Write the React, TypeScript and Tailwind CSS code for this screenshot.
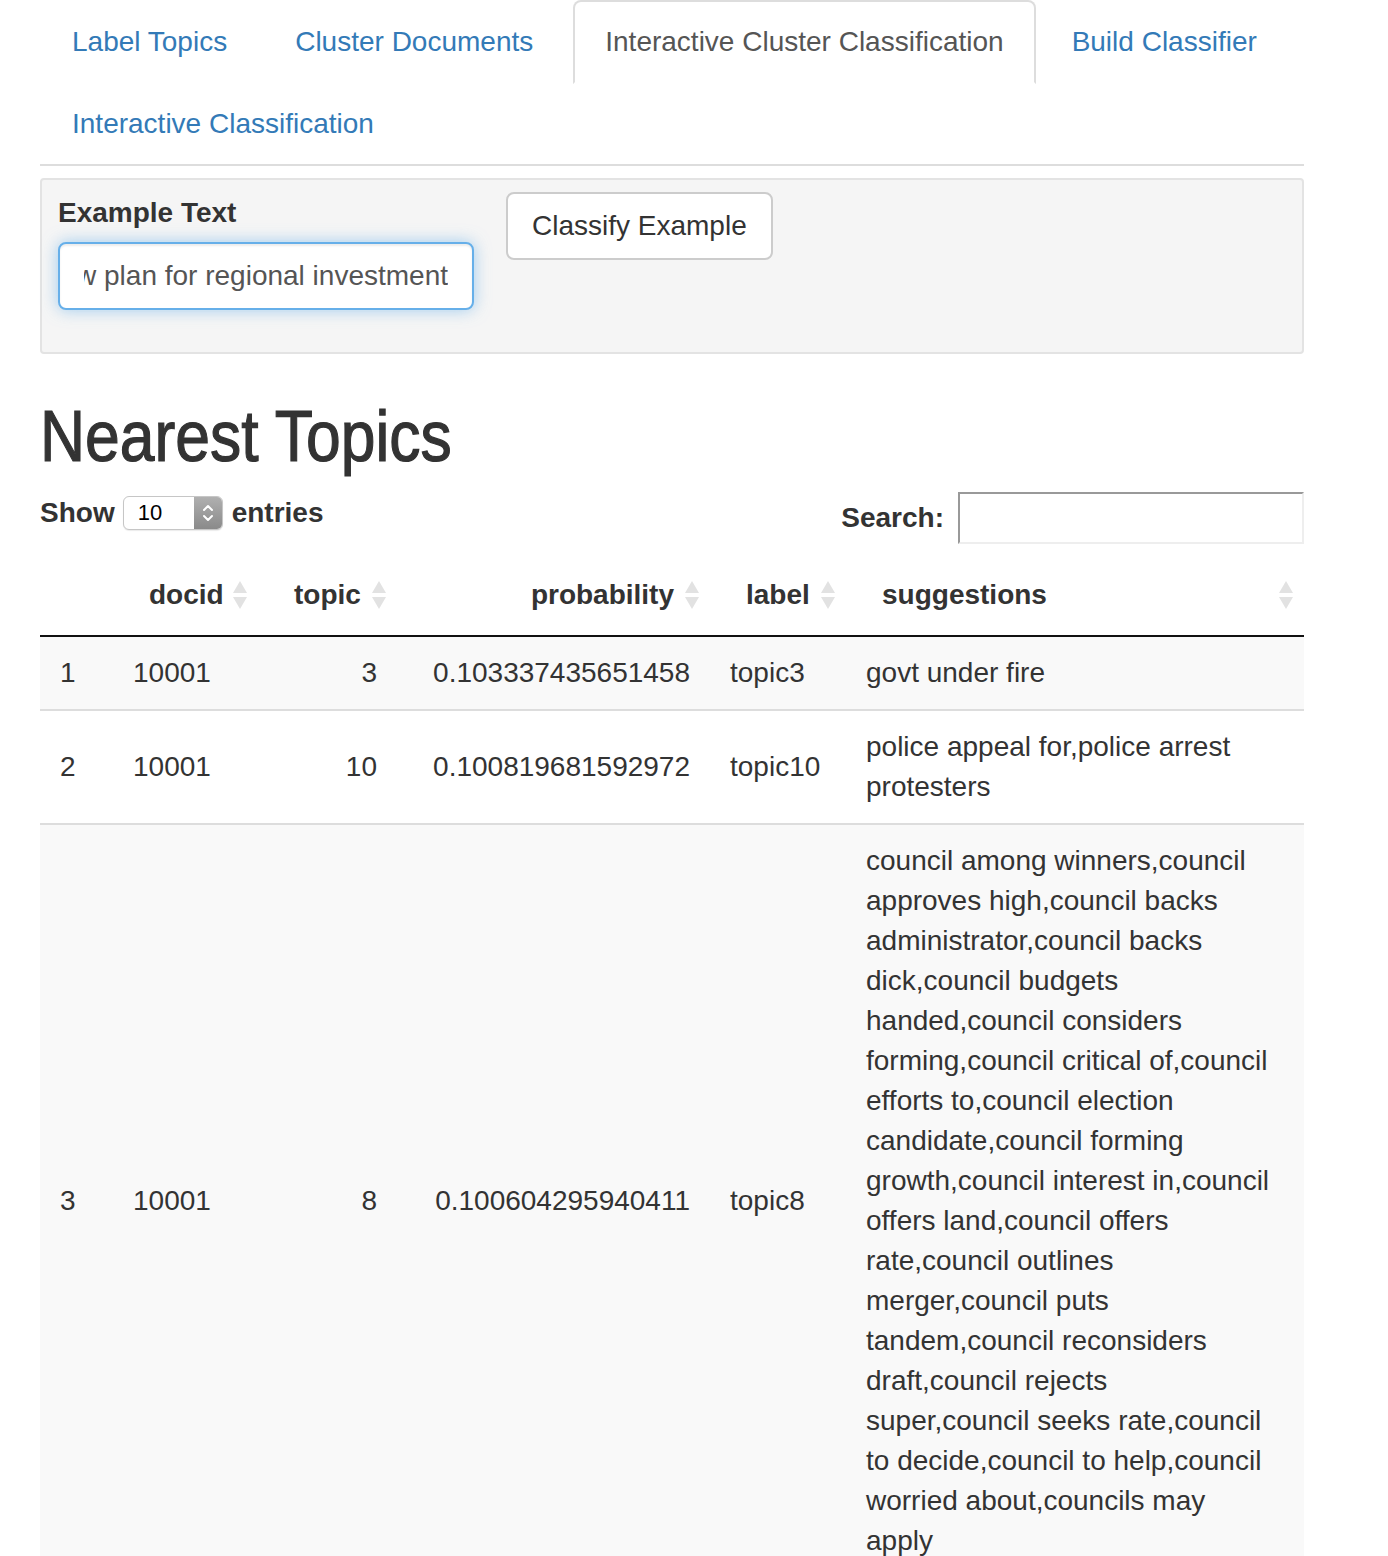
import React from 'react'

const tabs = [
  { name: 'Label Topics', active: false },
  { name: 'Cluster Documents', active: false },
  { name: 'Interactive Cluster Classification', active: true },
  { name: 'Build Classifier', active: false },
  { name: 'Interactive Classification', active: false },
]

interface Row {
  idx: number
  docid: string
  topic: number
  probability: string
  label: string
  lines: string[]
}

const rows: Row[] = [
  { idx: 1, docid: '10001', topic: 3, probability: '0.103337435651458', label: 'topic3', lines: ['govt under fire'] },
  {
    idx: 2, docid: '10001', topic: 10, probability: '0.100819681592972', label: 'topic10',
    lines: ['police appeal for,police arrest', 'protesters'],
  },
  {
    idx: 3, docid: '10001', topic: 8, probability: '0.100604295940411', label: 'topic8',
    lines: [
      'council among winners,council',
      'approves high,council backs',
      'administrator,council backs',
      'dick,council budgets',
      'handed,council considers',
      'forming,council critical of,council',
      'efforts to,council election',
      'candidate,council forming',
      'growth,council interest in,council',
      'offers land,council offers',
      'rate,council outlines',
      'merger,council puts',
      'tandem,council reconsiders',
      'draft,council rejects',
      'super,council seeks rate,council',
      'to decide,council to help,council',
      'worried about,councils may',
      'apply',
    ],
  },
]

function SortIcon() {
  return (
    <svg className="absolute right-[10px] top-1/2 -translate-y-1/2" width="16" height="32" viewBox="0 0 16 32">
      <polygon points="8,2 15,14 1,14" fill="#e2e2e2" />
      <polygon points="1,18 15,18 8,30" fill="#e2e2e2" />
    </svg>
  )
}

function Th({ children, right = false }: { children?: React.ReactNode; right?: boolean }) {
  return (
    <th className={`relative px-[36px] py-[20px] font-bold leading-[40px] border-b-[2px] border-[#111] ${right ? 'text-right' : 'text-left'}`}>
      {children}
      <SortIcon />
    </th>
  )
}

export default function App() {
  return (
    <div className="w-[1388px] min-h-[1556px] bg-white text-[#333] text-[28px] leading-[40px]" style={{ fontFamily: '"Liberation Sans", Arial, sans-serif' }}>
      <div className="ml-[40px] w-[1264px]">
        {/* tabs */}
        <ul className="flex flex-wrap border-b-[2px] border-[#ddd]">
          {tabs.map((t, i) => (
            <li key={t.name} className="-mb-[2px]">
              <a
                className={`block ${i === 1 ? 'mr-[8px]' : 'mr-[4px]'} px-[30px] py-[20px] leading-[40px] border-[2px] rounded-t-[8px] ${
                  t.active ? 'bg-white text-[#555] border-[#ddd] border-b-transparent' : 'text-[#337ab7] border-transparent'
                }`}
              >
                {t.name}
              </a>
            </li>
          ))}
        </ul>

        {/* input panel */}
        <div className="mt-[12px] bg-[#f5f5f5] border-[2px] border-[#e3e3e3] rounded-[4px] px-[16px] py-[12px] flex">
          <div className="w-[440px] pr-[24px] mb-[30px]">
            <div className="font-bold leading-[40px] mt-[1px] mb-[9px]">Example Text</div>
            <div className="h-[68px] w-[416px] bg-white border-[2px] border-[#66afe9] rounded-[8px] px-[24px] flex items-center shadow-[inset_0_2px_2px_rgba(0,0,0,0.075),0_0_16px_rgba(102,175,233,0.6)]">
              <div className="flex-1 overflow-hidden flex justify-end whitespace-nowrap text-[#555]">
                <span>a new plan for regional investment</span>
              </div>
            </div>
          </div>
          <div className="ml-[8px]">
            <button className="h-[68px] px-[24px] bg-white border-[2px] border-[#ccc] rounded-[8px] text-[#333] leading-[40px]">
              Classify Example
            </button>
          </div>
        </div>

        <h1 className="mt-[43px] mb-[15px] text-[72px] leading-[79px] font-normal text-[#333]">
          <span className="inline-block origin-left scale-x-[0.867] [-webkit-text-stroke:1.2px_#333]">Nearest Topics</span>
        </h1>

        {/* datatable controls */}
        <div className="flex justify-between items-start">
          <div className="flex items-center mt-[5px] h-[34px] font-bold">
            <span>Show</span>
            <div className="ml-[8px] mr-[9px] w-[100px] h-[34px] rounded-[6px] border border-[#c6c6c6] bg-white flex overflow-hidden shadow-[0_1px_1px_rgba(0,0,0,0.08)]">
              <span className="flex-1 pl-[14px] text-[22px] leading-[32px] font-normal text-black">10</span>
              <span className="w-[28px] h-full bg-gradient-to-b from-[#b0b0b0] to-[#8a8a8a] flex items-center justify-center">
                <svg width="14" height="22" viewBox="0 0 14 22">
                  <polyline points="3,8 7,4 11,8" fill="none" stroke="white" strokeWidth="2" strokeLinecap="round" strokeLinejoin="round" />
                  <polyline points="3,14 7,18 11,14" fill="none" stroke="white" strokeWidth="2" strokeLinecap="round" strokeLinejoin="round" />
                </svg>
              </span>
            </div>
            <span>entries</span>
          </div>
          <div className="flex items-center h-[52px] mt-[1px]">
            <span className="font-bold">Search:</span>
            <div className="ml-[14px] w-[346px] h-[52px] bg-white border-[2px] border-t-[#999] border-l-[#999] border-b-[#eee] border-r-[#eee]" />
          </div>
        </div>

        {/* table */}
        <table className="mt-[11px] w-[1264px] table-fixed border-collapse">
          <colgroup>
            <col className="w-[73px]" />
            <col className="w-[145px]" />
            <col className="w-[139px]" />
            <col className="w-[313px]" />
            <col className="w-[136px]" />
            <col className="w-[458px]" />
          </colgroup>
          <thead>
            <tr>
              <th className="border-b-[2px] border-[#111]" />
              <Th>docid</Th>
              <Th>topic</Th>
              <Th right>probability</Th>
              <Th>label</Th>
              <Th>suggestions</Th>
            </tr>
          </thead>
          <tbody>
            {rows.map((r, i) => (
              <tr key={r.idx} className={`${i % 2 === 0 ? 'bg-[#f9f9f9]' : 'bg-white'} ${i > 0 ? 'border-t-[2px] border-[#ddd]' : ''}`}>
                <td className="px-[20px] py-[16px] align-middle">{r.idx}</td>
                <td className="px-[20px] py-[16px] align-middle">{r.docid}</td>
                <td className="px-[20px] py-[16px] align-middle text-right">{r.topic}</td>
                <td className="px-[20px] py-[16px] align-middle text-right">{r.probability}</td>
                <td className="px-[20px] py-[16px] align-middle">{r.label}</td>
                <td className="px-[20px] py-[16px] align-middle">
                  {r.lines.map(l => (
                    <span key={l} className="block whitespace-nowrap">{l}</span>
                  ))}
                </td>
              </tr>
            ))}
          </tbody>
        </table>
      </div>
    </div>
  )
}
